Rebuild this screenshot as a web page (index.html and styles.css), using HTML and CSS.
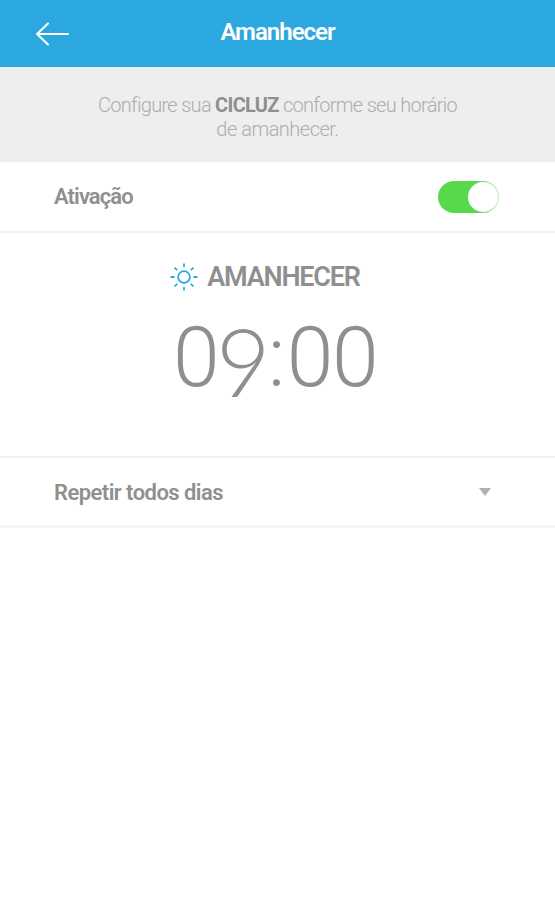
FILE: index.html
```html
<!DOCTYPE html>
<html lang="pt-BR">
<head>
  <meta charset="UTF-8">
  <title>Amanhecer</title>
  <link rel="stylesheet" href="styles.css">
</head>
<body>
  <header class="topbar">
    <a class="back" href="#" aria-label="Voltar">
      <svg width="34" height="24" viewBox="0 0 34 24" fill="none" stroke="#fff" stroke-width="2" stroke-linecap="round" stroke-linejoin="round">
        <path d="M12 1.500 1 12l11 10.500M1 12h31"/>
      </svg>
    </a>
    <h1>Amanhecer</h1>
  </header>

  <p class="intro">
    <span class="intro-first">Configure sua <b>CICLUZ</b> conforme seu horário</span><br>
    de amanhecer.
  </p>

  <div class="row activation">
    <span>Ativação</span>
    <span class="switch"><span class="knob"></span></span>
  </div>

  <div class="alarm">
    <div class="alarm-name">
      <svg width="28" height="28" viewBox="0 0 28 28" fill="none" stroke="#2ba8e0" stroke-width="1.800">
        <circle cx="14" cy="14" r="5.900"/>
        <path d="M14 .5v3.500M14 24v3.500M.5 14h4M23.500 14h4M4.600 4.600l2.600 2.600M20.800 20.800l2.600 2.600M4.600 23.400l2.600-2.600M20.800 7.200l2.600-2.600"/>
      </svg>
      <span>AMANHECER</span>
    </div>
    <div class="time">0<span class="nine">9</span><span class="colon">:</span>00</div>
  </div>

  <div class="row repeat">
    <span>Repetir todos dias</span>
    <span class="caret"></span>
  </div>
</body>
</html>
```
FILE: styles.css
```css
body {
  margin: 0;
  background: #fff;
  color: #8f8f8f;
  font-family: Roboto, "Liberation Sans", sans-serif;
}

.topbar {
  display: grid;
  grid-template-columns: 70px 1fr 70px;
  align-items: center;
  height: 67px;
  background: #2ba8e0;
  color: #fff;
}

.back {
  display: flex;
  padding-left: 36px;
}

h1 {
  margin: 0;
  padding-bottom: 3px;
  font-size: 24px;
  line-height: 28px;
  font-weight: 600;
  letter-spacing: -1px;
  text-align: center;
}

.intro {
  height: 69px;
  margin: 0;
  padding-top: 26px;
  background: #eee;
  color: #adadad;
  font-size: 20px;
  line-height: 24px;
  font-weight: 300;
  letter-spacing: -0.5px;
  text-align: center;
}

.intro-first {
  letter-spacing: -0.7px;
}

.intro b {
  color: #8f8f8f;
  font-weight: 700;
}

.row {
  display: flex;
  align-items: center;
  justify-content: space-between;
  padding-left: 54px;
  font-size: 22px;
  font-weight: 600;
  letter-spacing: -0.55px;
}

.activation {
  height: 69px;
  padding-right: 56px;
  border-bottom: 2px solid #f1f1f1;
  letter-spacing: -0.9px;
}

.switch {
  display: flex;
  justify-content: flex-end;
  box-sizing: border-box;
  width: 61px;
  height: 32px;
  padding: 1px;
  border-radius: 16px;
  background: linear-gradient(to right, #58d94b 65%, #c4e8c0);
}

.knob {
  width: 30px;
  height: 30px;
  border-radius: 50%;
  background: #fff;
}

.alarm {
  box-sizing: border-box;
  height: 223px;
  padding-top: 28px;
}

.alarm-name {
  display: flex;
  align-items: center;
  justify-content: center;
  gap: 9px;
  height: 31px;
  padding-right: 25px;
  font-size: 27px;
  font-weight: 600;
  letter-spacing: -1.2px;
}

.time {
  height: 100px;
  margin-top: 16px;
  padding-right: 5px;
  font-size: 84px;
  line-height: 100px;
  font-weight: 300;
  letter-spacing: -1.5px;
  text-align: center;
}

/* the nine hangs below the baseline */
.nine {
  font-family: Lato, sans-serif;
  font-size: 94px;
  line-height: 0;
  vertical-align: -11px;
  letter-spacing: -8px;
  margin-left: -2px;
}

.colon {
  margin: 0 3px 0 5px;
}

.repeat {
  height: 67px;
  padding-right: 64px;
  border-top: 2px solid #f1f1f1;
  border-bottom: 3px solid #f5f5f5;
}

.repeat span:first-child {
  padding-top: 1px;
}

.caret {
  border-left: 6px solid transparent;
  border-right: 6px solid transparent;
  border-top: 8px solid #b0b0b0;
}
```
